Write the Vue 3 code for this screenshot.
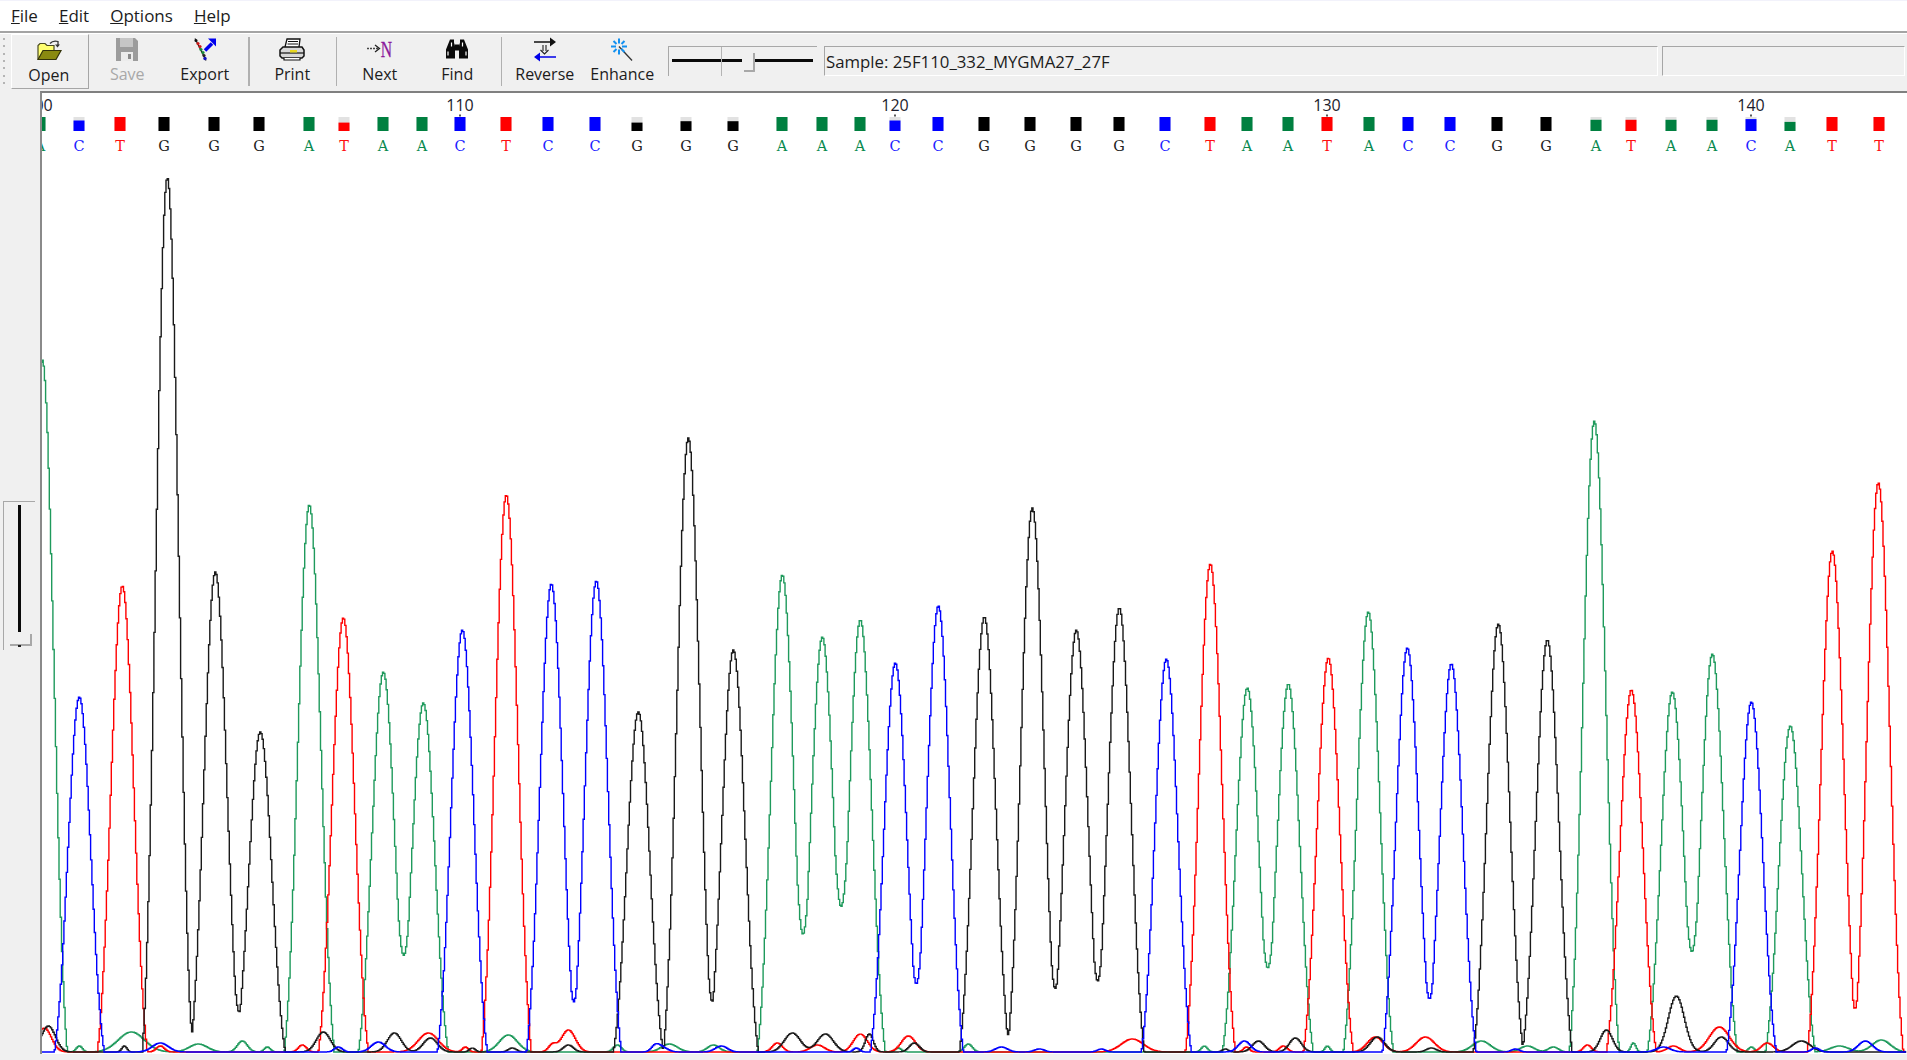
<template>
  <div class="app">
    <div class="menubar">
      <span v-for="m in menus" :key="m" class="menu-item"><u>{{ m[0] }}</u>{{ m.slice(1) }}</span>
    </div>

    <div class="toolbar">
      <div class="gripper"><i v-for="n in 7" :key="n"></i></div>

      <button class="tool checked">
        <svg class="icon" width="26" height="22" viewBox="0 0 26 22">
          <path d="M2 20V6l2-2h5l2 2h7v5" fill="#ffff70" stroke="#4a4a20" stroke-width="1.2" />
          <path d="M2 20 7 11h18l-5 9Z" fill="#8a8a10" stroke="#33330a" stroke-width="1.2" />
          <path d="M14 4Q17 .5 22 2v4" fill="none" stroke="#333" stroke-width="1.3" />
          <path d="M19 5h5l-2.500 3Z" fill="#333" />
        </svg>
        <span>Open</span>
      </button>
      <button class="tool disabled">
        <svg class="icon" width="22" height="23" viewBox="0 0 22 23">
          <path d="M0 0H19L22 3V23H0Z" fill="#9c9c9c" />
          <rect x="4" y="0" width="13" height="9" fill="#c6c6c6" />
          <rect x="5" y="14" width="12" height="9" fill="#ececec" />
          <rect x="12" y="16" width="3" height="5" fill="#8a8a8a" />
        </svg>
        <span>Save</span>
      </button>
      <button class="tool">
        <svg class="icon" width="24" height="24" viewBox="0 0 24 24">
          <path d="M2 1 13 23" stroke="#222" stroke-width="1.200" />
          <circle cx="3" cy="3" r="1.500" fill="#111" />
          <circle cx="5" cy="6" r="1.600" fill="#d01818" />
          <circle cx="7" cy="9" r="1.600" fill="#d01818" />
          <circle cx="8" cy="12" r="1.600" fill="#1a8a3a" />
          <circle cx="10" cy="15" r="1.600" fill="#1a8a3a" />
          <circle cx="11" cy="18" r="1.600" fill="#222" />
          <circle cx="12" cy="21" r="1.700" fill="#1010c0" />
          <path d="M12 13 19 6" stroke="#0000ee" stroke-width="3.500" />
          <path d="M15 1h8v8Z" fill="#0000ee" />
        </svg>
        <span>Export</span>
      </button>

      <div class="sep"></div>

      <button class="tool">
        <svg class="icon" width="26" height="23" viewBox="0 0 26 23">
          <path d="M6 9 8 1H21L20 9" fill="#fff" stroke="#111" stroke-width="1.300" />
          <path d="M9 3.500H19M8.500 6H19" stroke="#111" stroke-width="1" />
          <path d="M1 12 4 9H23L25 12V18L23 20H3L1 18Z" fill="#d8d8d8" stroke="#111" stroke-width="1.500" />
          <path d="M1 15H25" stroke="#111" stroke-width="1.200" />
          <rect x="11" y="12" width="7" height="2.500" fill="#e8d820" />
          <path d="M5 20v2H21v-2" fill="#fff" stroke="#111" stroke-width="1.200" />
        </svg>
        <span>Print</span>
      </button>

      <div class="sep"></div>

      <button class="tool">
        <svg class="icon" width="27" height="22" viewBox="0 0 27 22">
          <path d="M1 10H12" stroke="#444" stroke-width="1.300" stroke-dasharray="2 1" />
          <path d="M9 6.500 13.500 10 9 13.500" fill="none" stroke="#222" stroke-width="1.300" />
          <text transform="translate(20.500 18) scale(.68 1)" class="n-letter">N</text>
        </svg>
        <span>Next</span>
      </button>
      <button class="tool">
        <svg class="icon" width="24" height="22" viewBox="0 0 24 22">
          <path d="M5 1H9V4L10 8V20H1V11Z" fill="#0a0a0a" />
          <path d="M19 1H15V4L14 8V20H23V11Z" fill="#0a0a0a" />
          <rect x="9.500" y="6" width="5" height="6" fill="#0a0a0a" />
          <path d="M3 13V17M6.500 4V8M17.500 4V8M21 13V17" stroke="#fff" stroke-width="1.200" />
        </svg>
        <span>Find</span>
      </button>

      <div class="sep"></div>

      <button class="tool">
        <svg class="icon" width="24" height="25" viewBox="0 0 24 25">
          <path d="M1 5H19" stroke="#111" stroke-width="1.500" />
          <path d="M17 .5 23 5 17 9.500Z" fill="#111" />
          <path d="M10 8V14M13 8V14" stroke="#222" stroke-width="1.100" />
          <path d="M7.500 13 11.500 17 15.500 13" fill="none" stroke="#222" stroke-width="1.100" />
          <path d="M5 20H23" stroke="#0000e8" stroke-width="1.500" />
          <path d="M7 15.500 1 20 7 24.500Z" fill="#0000e8" />
        </svg>
        <span>Reverse</span>
      </button>
      <button class="tool">
        <svg class="icon" width="22" height="24" viewBox="0 0 22 24">
          <path d="M8 9 21 23" stroke="#333" stroke-width="1.300" />
          <path d="M8 1V6M8 12V17M0 9H5M11 9H16M2.500 3.500 5.500 6.500M13.500 3.500 10.500 6.500M2.500 14.500 5.500 11.500M13.500 14.500 10.500 11.500" stroke="#1290f0" stroke-width="2" />
        </svg>
        <span>Enhance</span>
      </button>

      <div class="h-slider">
        <div class="h-track">
          <i class="h-seg left"></i>
          <i class="h-seg right"></i>
        </div>
        <i class="h-tick"></i>
        <i class="h-thumb"></i>
      </div>

      <div class="panel sample">Sample: 25F110_332_MYGMA27_27F</div>
      <div class="panel extra"></div>
    </div>

    <div class="main">
      <div class="side">
        <div class="v-slider">
          <i class="v-track"></i>
          <i class="v-thumb"></i>
          <i class="v-dot"></i>
        </div>
      </div>

      <div class="chart">
        <!-- viewBox is in window coordinates, so the positions below read off the screen -->
        <svg class="trace" width="1865" height="961" viewBox="42 92 1865 961">
          <text v-for="r in ruler" :key="r.label" :x="r.x" y="110" class="ruler">{{ r.label }}</text>
          <rect v-for="r in ruler" :key="'t' + r.label" :x="r.x - 0.7" y="113.500" width="1.400" height="2" fill="#111" />

          <g v-for="b in calls" :key="b.id">
            <rect :x="b.x - 5.500" y="116" width="11" height="14" fill="#e2e2e2" />
            <rect :x="b.x - 5.500" :y="130 - 14 * b.q" width="11" :height="14 * b.q" :fill="barColors[b.base]" />
            <text :x="b.x" y="150" class="call" :fill="letterColors[b.base]">{{ b.base }}</text>
          </g>

          <path v-for="t in traces" :key="t.base" :d="t.d" :stroke="t.color" class="line" />
        </svg>
      </div>
    </div>
  </div>
</template>

<script setup>
import { computed } from 'vue'

const menus = ['File', 'Edit', 'Options', 'Help']

const barColors = { A: '#008040', C: '#0000ff', G: '#000000', T: '#ff0000' }
const letterColors = { A: '#0a8a50', C: '#2020ff', G: '#222222', T: '#ff1010' }
const traceColors = { A: '#1f9a5c', T: '#ff0000', G: '#1a1a1a', C: '#0000ff' }

const BASELINE = 1051

// base, peak x, peak height, call x, bar fill (1 = full)
const peaks = [
  ['A', 43, 692, 40, 1],
  ['C', 80, 355, 79, 0.75],
  ['T', 123, 466, 120, 1],
  ['G', 168, 874, 164, 1],
  ['G', 216, 480, 214, 1],
  ['G', 261, 320, 259, 1],
  ['A', 310, 547, 309, 1],
  ['T', 344, 434, 344, 0.6],
  ['A', 384, 380, 383, 1],
  ['A', 424, 349, 422, 1],
  ['C', 463, 422, 460, 1],
  ['T', 507, 557, 506, 1],
  ['C', 552, 468, 548, 1],
  ['C', 597, 471, 595, 1],
  ['G', 639, 340, 637, 0.6],
  ['G', 689, 614, 686, 0.7],
  ['G', 734, 402, 733, 0.7],
  ['A', 783, 477, 782, 1],
  ['A', 823, 415, 822, 1],
  ['A', 861, 432, 860, 1],
  ['C', 896, 389, 895, 0.75],
  ['C', 939, 446, 938, 1],
  ['G', 985, 435, 984, 1],
  ['G', 1033, 544, 1030, 1],
  ['G', 1077, 422, 1076, 1],
  ['G', 1120, 444, 1119, 1],
  ['C', 1167, 393, 1165, 1],
  ['T', 1211, 488, 1210, 1],
  ['A', 1248, 364, 1247, 1],
  ['A', 1289, 368, 1288, 1],
  ['T', 1329, 394, 1327, 1],
  ['A', 1369, 440, 1369, 1],
  ['C', 1408, 404, 1408, 1],
  ['C', 1452, 388, 1450, 1],
  ['G', 1499, 428, 1497, 1],
  ['G', 1548, 412, 1546, 1],
  ['A', 1595, 631, 1596, 0.8],
  ['T', 1632, 362, 1631, 0.8],
  ['A', 1673, 360, 1671, 0.8],
  ['A', 1713, 398, 1712, 0.8],
  ['C', 1752, 350, 1751, 0.85],
  ['A', 1791, 326, 1790, 0.65],
  ['T', 1833, 501, 1832, 1],
  ['T', 1879, 569, 1879, 1],
]

// low level signal under the called peaks: x, height, sigma
const noise = {
  A: [[80, 6, 3], [132, 20, 13], [199, 8, 9], [243, 11, 5], [268, 5, 3], [509, 17, 9], [618, 7, 4], [670, 8, 8], [714, 7, 6], [899, 4, 3], [969, 8, 4], [1205, 6, 3], [1328, 6, 2.5], [1482, 11, 9], [1528, 6, 7], [1554, 5, 5], [1634, 9, 2.5], [1752, 5, 3], [1840, 6, 9], [1882, 12, 9]],
  T: [[45, 24, 7], [161, 6, 4], [303, 7, 4], [429, 19, 10], [466, 5, 3], [553, 7, 4], [569, 22, 7], [778, 9, 5], [818, 7, 7], [861, 18, 7], [909, 16, 7], [1133, 13, 11], [1247, 5, 3], [1284, 6, 4], [1376, 15, 8], [1426, 15, 9], [1588, 7, 4], [1674, 6, 6], [1720, 25, 10], [1768, 9, 6]],
  G: [[49, 26, 7], [125, 6, 2.5], [324, 20, 7], [395, 19, 7], [431, 14, 7], [473, 4, 3], [513, 4, 4], [569, 7, 5], [793, 19, 8], [826, 18, 8], [870, 18, 4], [915, 9, 5], [1226, 3, 3], [1259, 11, 6], [1296, 14, 6], [1378, 15, 7], [1432, 4, 5], [1607, 22, 6], [1677, 56, 8], [1722, 15, 7], [1802, 11, 9]],
  C: [[161, 9, 8], [339, 5, 4], [379, 10, 7], [656, 5, 4], [662, 5, 6], [722, 6, 6], [857, 4, 3], [1002, 5, 6], [1040, 3, 5], [1102, 3, 4], [1245, 11, 6], [1516, 3, 4], [1664, 5, 7], [1816, 4, 4], [1866, 11, 7]],
}

const calls = peaks.map((p, i) => ({ id: i, base: p[0], x: p[3], q: p[4] }))

const ruler = [
  { label: '100', x: 39 },
  { label: '110', x: 460 },
  { label: '120', x: 895 },
  { label: '130', x: 1327 },
  { label: '140', x: 1751 },
]

const gauss = (d, s) => Math.exp(-(d * d) / (2 * s * s))

// a called peak dies out faster than a gaussian, it is flat zero 25px away
const bell = d => {
  const edge = Math.max(0, 1 - Math.abs(d / 25) ** 6)
  return gauss(d, 10.8) * edge
}

const traces = computed(() => {
  return ['A', 'T', 'G', 'C'].map(base => {
    const own = peaks.filter(p => p[0] === base)
    const signal = x => {
      let sum = 0
      own.forEach(p => { sum += p[2] * bell(x - p[1]) })
      noise[base].forEach(([c, h, s]) => { sum += h * gauss(x - c, s) })
      return sum
    }

    // the program draws one value per column, hence the stepped outline
    const step = 1.216
    let d = ''
    for (let x = 42; x <= 1907; x += step) {
      const y = (BASELINE - signal(x)).toFixed(1)
      d += d ? `V${y}H${x.toFixed(1)}` : `M${x} ${y}`
    }
    return { base, d, color: traceColors[base] }
  })
})
</script>

<style>
html, body {
  margin: 0;
  padding: 0;
  overflow: hidden;
}
</style>

<style scoped>
.app {
  width: 1907px;
  height: 1060px;
  display: flex;
  flex-direction: column;
  background: #f0f0f0;
  font-family: "Open Sans", "Noto Sans", sans-serif;
  color: #1c1c1c;
  overflow: hidden;
}

.menubar {
  height: 31px;
  box-sizing: border-box;
  display: flex;
  align-items: center;
  background: #fff;
  border-top: 1px solid #f2f2fb;
  padding: 0 0 2px 11px;
  gap: 21px;
  font-size: 17px;
}

.toolbar {
  height: 60px;
  box-sizing: border-box;
  display: flex;
  align-items: flex-start;
  background: #f0f0f0;
  border-top: 2px solid #a4a4a4;
  box-shadow: inset 0 1px 0 #fff;
}

.gripper {
  width: 11px;
  height: 46px;
  margin-top: 5px;
  display: flex;
  flex-direction: column;
  justify-content: space-between;
  flex-shrink: 0;
}

.gripper i {
  width: 2px;
  height: 2px;
  margin-left: 3px;
  background: #b4b4b4;
}

.tool {
  width: 77.500px;
  height: 55px;
  margin: 1px 0 0;
  padding: 3px 0 0;
  display: flex;
  flex-direction: column;
  align-items: center;
  flex-shrink: 0;
  background: none;
  border: none;
  font-family: inherit;
  font-size: 16px;
  color: #1c1c1c;
  box-sizing: border-box;
}

.tool .icon {
  height: 25px;
  overflow: visible;
}

.tool span {
  line-height: 20px;
  margin-top: 2px;
}

.tool.checked {
  border-top: 1px solid #fff;
  border-left: 1px solid #fff;
  border-right: 1px solid #a6a6a6;
  border-bottom: 1px solid #a6a6a6;
  padding-right: 2px;
}

.tool.disabled span {
  color: #a8a8a8;
}

.n-letter {
  font-family: "Liberation Serif", serif;
  font-size: 23px;
  text-anchor: middle;
  fill: #8b1a9b;
  stroke: #8b1a9b;
  stroke-width: 0.3px;
}

.sep {
  width: 10px;
  height: 49px;
  margin-top: 4px;
  flex-shrink: 0;
  position: relative;
}

.sep::after {
  content: "";
  position: absolute;
  left: 4.500px;
  top: 0;
  bottom: 0;
  width: 1.500px;
  background: #b0b0b0;
}

.h-slider {
  position: relative;
  width: 149px;
  height: 30px;
  margin: 13px 0 0 7px;
  box-sizing: border-box;
  border-top: 1px solid #a8a8a8;
  border-left: 1px solid #a8a8a8;
  flex-shrink: 0;
}

.h-track {
  display: flex;
  justify-content: space-between;
  padding: 12px 4px 0 3px;
}

.h-seg {
  height: 3px;
  background: #0a0a0a;
}

.h-seg.left {
  width: 70px;
}

.h-seg.right {
  width: 58px;
}

.h-tick {
  position: absolute;
  left: 52px;
  top: 0;
  bottom: 0;
  width: 1px;
  background: #b4b4b4;
}

.h-thumb {
  position: absolute;
  left: 75px;
  top: 6px;
  width: 11px;
  height: 19px;
  box-sizing: border-box;
  border-right: 2px solid #a8a8a8;
  border-bottom: 2px solid #a8a8a8;
  border-bottom-right-radius: 1px;
  clip-path: polygon(60% 0, 100% 0, 100% 100%, 0 100%, 0 82%, 60% 82%);
}

.panel {
  height: 30px;
  margin-top: 13px;
  box-sizing: border-box;
  border-top: 1.500px solid #a6a6a6;
  border-left: 1.500px solid #a6a6a6;
  border-right: 1px solid #fff;
  border-bottom: 1px solid #fff;
  display: flex;
  align-items: center;
  flex-shrink: 0;
  font-size: 16.800px;
  padding-top: 1px;
}

.sample {
  width: 834px;
  margin-left: 7px;
  padding-left: 1px;
}

.extra {
  width: 243px;
  margin-left: 4px;
}

.main {
  flex: 1;
  display: flex;
  min-height: 0;
}

.side {
  width: 40px;
  flex-shrink: 0;
  padding-top: 410px;
}

.v-slider {
  position: relative;
  width: 32px;
  height: 149px;
  margin-left: 3px;
  box-sizing: border-box;
  border-top: 1px solid #a8a8a8;
  border-left: 1px solid #a8a8a8;
}

.v-track {
  position: absolute;
  left: 14px;
  top: 3px;
  width: 3px;
  height: 127px;
  background: #0a0a0a;
}

.v-thumb {
  position: absolute;
  left: 6px;
  top: 132px;
  width: 22px;
  height: 12px;
  box-sizing: border-box;
  border-right: 2px solid #a8a8a8;
  border-bottom: 2px solid #a8a8a8;
  clip-path: polygon(82% 0, 100% 0, 100% 100%, 0 100%, 0 80%, 82% 80%);
}

.v-dot {
  position: absolute;
  left: 14px;
  top: 143px;
  width: 3px;
  height: 2px;
  background: #222;
}

.chart {
  width: 1867px;
  height: 963px;
  box-sizing: border-box;
  border-top: 2px solid #808080;
  border-left: 2px solid #8a8a8a;
  background: #fff;
}

.trace {
  display: block;
}

.ruler {
  font-family: "Open Sans", "Noto Sans", sans-serif;
  font-size: 16px;
  text-anchor: middle;
  fill: #1c1c2c;
}

.call {
  font-family: "DejaVu Serif", "Liberation Serif", serif;
  font-size: 14.500px;
  text-anchor: middle;
}

.line {
  fill: none;
  stroke-width: 1.400;
}
</style>
